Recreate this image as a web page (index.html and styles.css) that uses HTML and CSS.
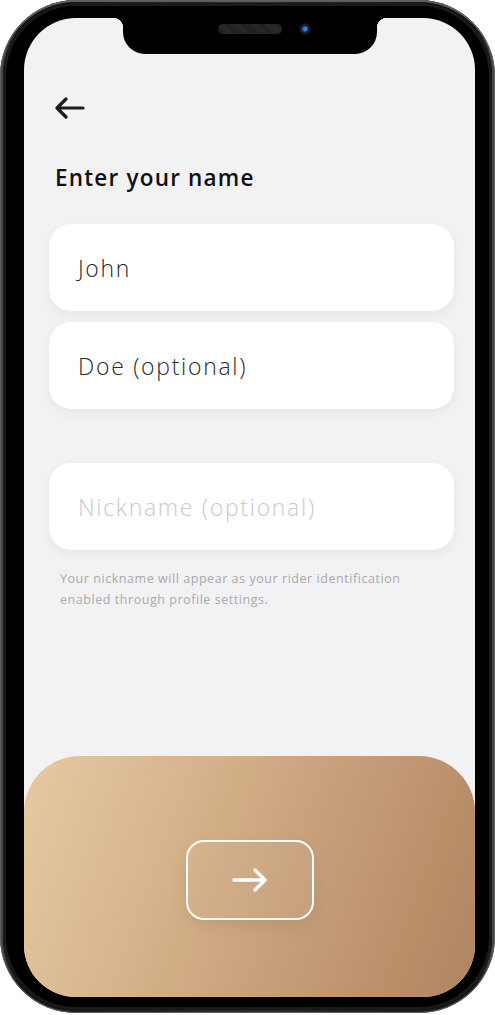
FILE: index.html
```html
<!DOCTYPE html>
<html>
<head>
<meta charset="utf-8">
<link rel="stylesheet" href="styles.css">
</head>
<body>
<div class="phone">
  <div class="bezel">
    <div class="screen">
      <div class="notch">
        <span class="speaker"></span>
        <span class="camera"></span>
      </div>
      <div class="content">
        <button class="back" aria-label="Back">
          <svg width="32" height="22" viewBox="0 0 32 22"><path d="M29 11H3M12 2L3 11l9 9" fill="none" stroke="#1c1c1e" stroke-width="3.2" stroke-linecap="round" stroke-linejoin="round"/></svg>
        </button>
        <h1 class="title">Enter your name</h1>
        <div class="field"><span class="value">John</span></div>
        <div class="field"><span class="value">Doe (optional)</span></div>
        <div class="field nick"><span class="placeholder">Nickname (optional)</span></div>
        <p class="hint">Your nickname will appear as your rider identification enabled through profile settings.</p>
      </div>
      <div class="panel">
        <button class="next" aria-label="Next">
          <svg width="38" height="26" viewBox="0 0 38 26"><path d="M3 13h31M24 3l10 10-10 10" fill="none" stroke="#fff" stroke-width="3.4" stroke-linecap="round" stroke-linejoin="round"/></svg>
        </button>
      </div>
    </div>
  </div>
</div>
</body>
</html>
```
FILE: styles.css
```css
* { box-sizing: border-box; }
html, body { margin: 0; padding: 0; background: #fff; }
body { width: 495px; height: 1015px; font-family: "Open Sans", "Noto Sans", sans-serif; }

.phone {
  width: 495px;
  height: 1013px;
  border-radius: 76px;
  padding: 3px;
  background: linear-gradient(90deg, #4a4a4a 0%, #151515 4%, #2a2a2a 50%, #151515 96%, #4a4a4a 100%);
  box-shadow: inset 0 0 0 1px #606060, inset 0 2px 0 #5a5a5a;
}
.bezel {
  width: 100%;
  height: 100%;
  border-radius: 73px;
  background: #000;
  padding: 15px 17px 13px 21px;
  box-shadow: inset 0 0 0 3px #1a1a1a;
}
.screen {
  position: relative;
  width: 100%;
  height: 100%;
  border-radius: 52px;
  overflow: hidden;
  background: #f2f2f4;
  display: flex;
  flex-direction: column;
}

.notch {
  position: absolute;
  top: 0;
  left: 99px;
  width: 254px;
  height: 36px;
  background: #000;
  border-radius: 0 0 22px 22px;
}
.notch::before, .notch::after {
  content: "";
  position: absolute;
  top: 0;
  width: 10px;
  height: 10px;
}
.notch::before { left: -10px; background: radial-gradient(circle at 0 100%, transparent 10px, #000 10.5px); }
.notch::after { right: -10px; background: radial-gradient(circle at 100% 100%, transparent 10px, #000 10.5px); }
.speaker {
  position: absolute;
  top: 6px;
  left: 95px;
  width: 64px;
  height: 10px;
  border-radius: 5px;
  background: repeating-linear-gradient(45deg, #1e1e1e 0 1px, #2c2c2c 1px 2px);
}
.camera {
  position: absolute;
  top: 5px;
  left: 176px;
  width: 12px;
  height: 12px;
  border-radius: 50%;
  background: radial-gradient(circle, #3a78d8 0 2px, #1a2a4a 3px, #0c0c12 6px);
}

.content {
  flex: 1;
  padding: 79px 21px 0 25px;
  display: flex;
  flex-direction: column;
}
.back {
  align-self: flex-start;
  margin: 0 0 0 5px;
  padding: 0;
  border: 0;
  background: none;
  width: 32px;
  height: 22px;
  display: block;
}
.back svg { display: block; }
.title {
  margin: 44px 0 31px 6px;
  font-size: 22.5px;
  line-height: 30px;
  font-weight: 600;
  color: #111;
  letter-spacing: 1.2px;
}
.field {
  height: 87px;
  border-radius: 22px;
  background: #fff;
  box-shadow: 0 4px 12px rgba(0, 0, 0, 0.05);
  display: flex;
  align-items: center;
  padding: 0 29px;
  margin-bottom: 11px;
  font-size: 23px;
  font-weight: 300;
  letter-spacing: 1.7px;
}
.value { color: #2a2a2a; }
.field.nick { margin-top: 43px; margin-bottom: 0; }
.placeholder { color: #c9c9cc; }
.hint {
  margin: 18px 0 0 11px;
  padding-right: 40px;
  font-size: 12.5px;
  line-height: 21px;
  color: #a9a9ad;
  font-weight: 400;
  letter-spacing: 0.55px;
}

.panel {
  height: 241px;
  flex: none;
  border-radius: 56px 56px 0 0;
  background: linear-gradient(110deg, #e7caa2 0%, #d5b28b 35%, #c49c77 65%, #b08460 100%);
  display: flex;
  justify-content: center;
  padding-top: 84px;
}
.next {
  width: 128px;
  height: 80px;
  border: 2px solid #fff;
  border-radius: 18px;
  background: rgba(255, 255, 255, 0.04);
  box-shadow: 0 6px 14px rgba(120, 80, 40, 0.15);
  display: flex;
  align-items: center;
  justify-content: center;
  padding: 0;
}
.next svg { display: block; }
```
